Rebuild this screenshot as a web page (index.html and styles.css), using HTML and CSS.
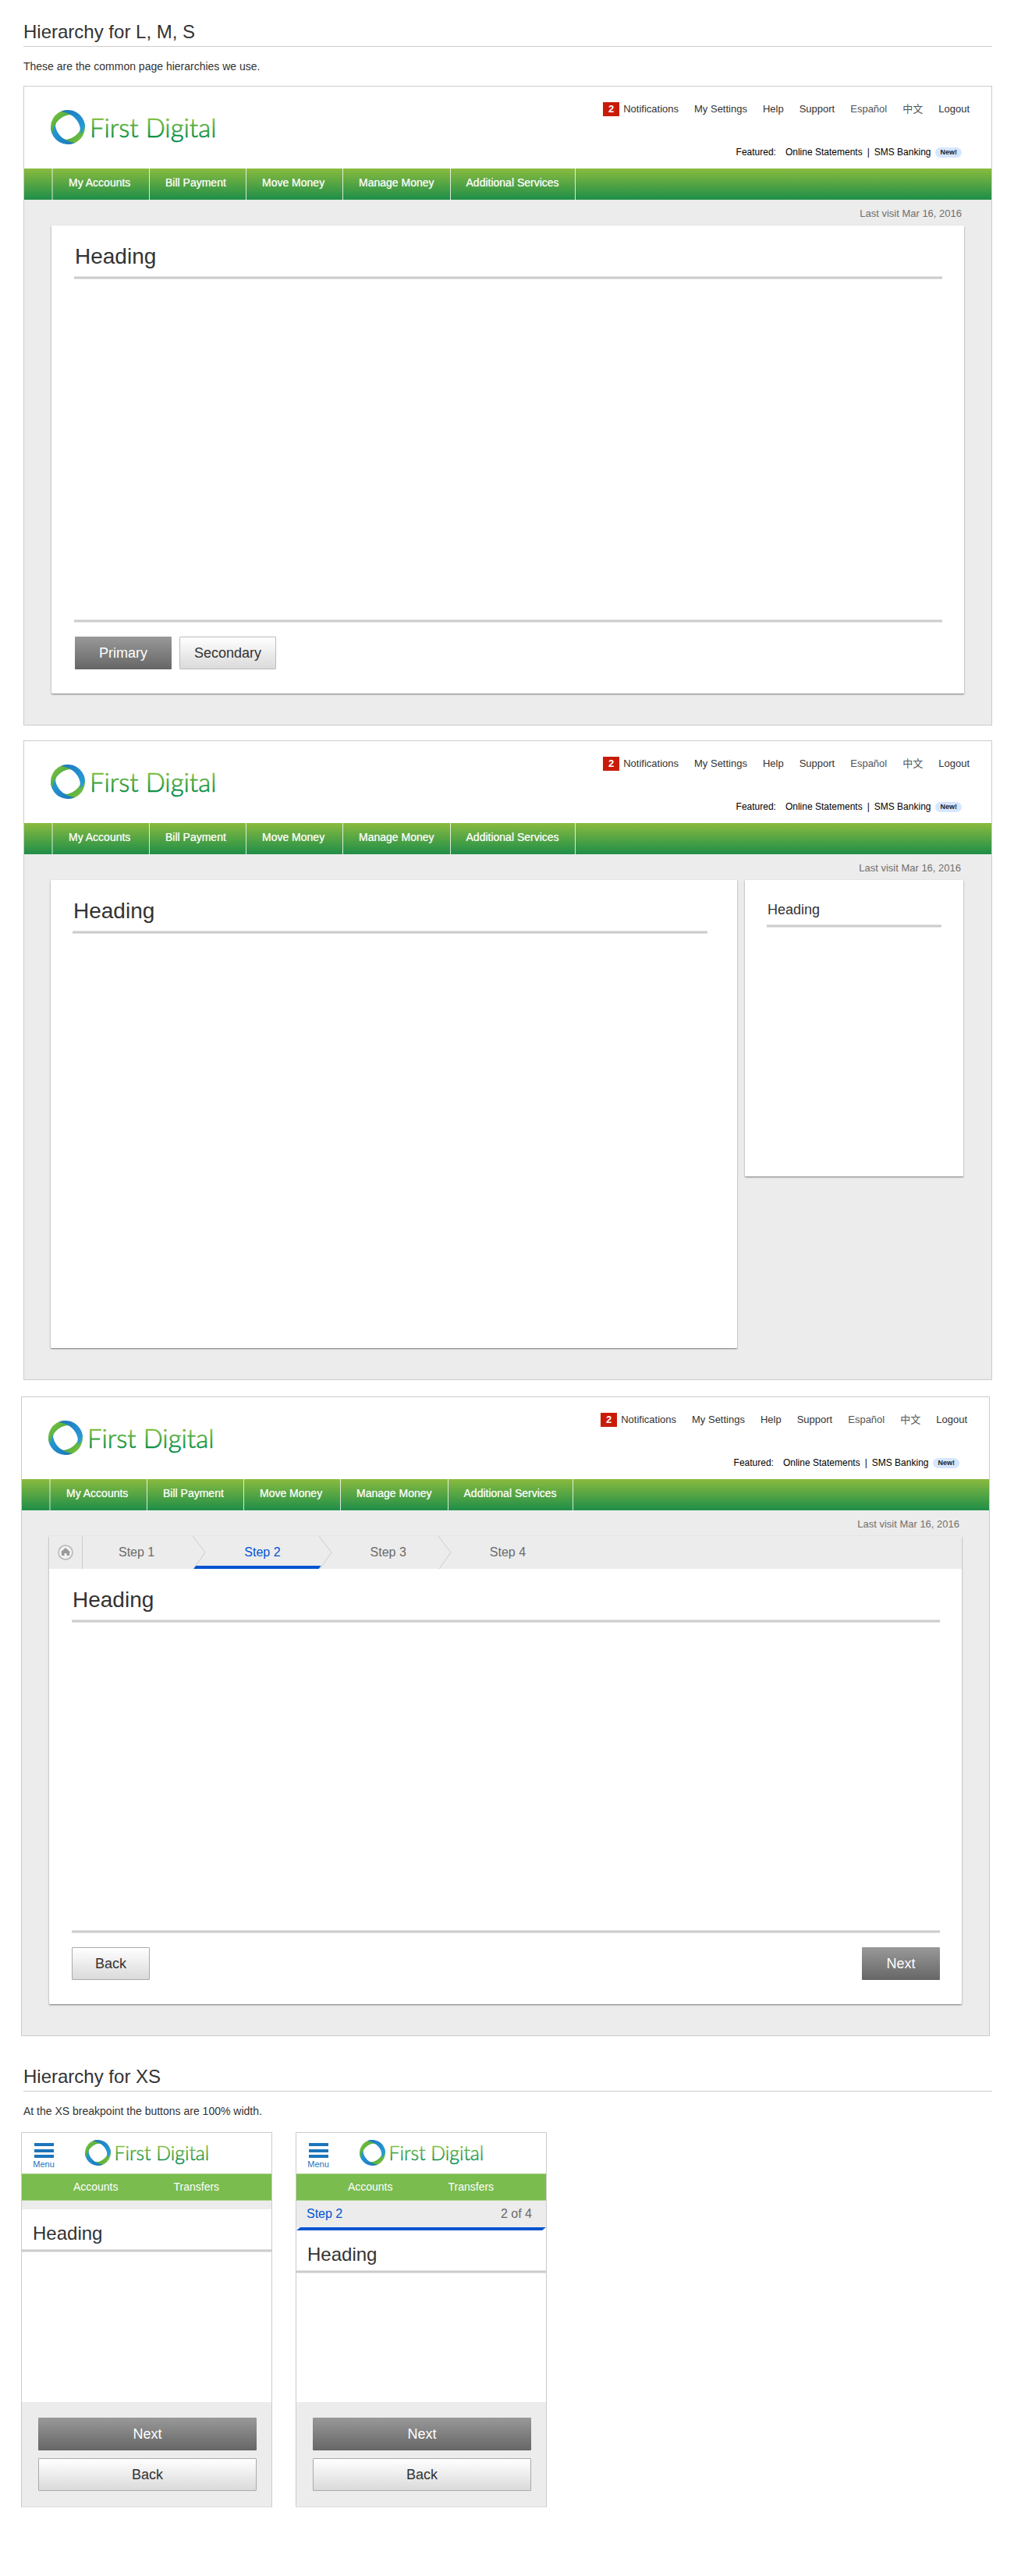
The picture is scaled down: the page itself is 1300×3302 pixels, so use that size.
FILE: index.html
```html
<!DOCTYPE html>
<html lang="en">
<head>
<meta charset="utf-8">
<title>Page hierarchy</title>
<link rel="stylesheet" href="styles.css">
</head>
<body>
<svg class="defs" width="0" height="0" aria-hidden="true">
  <defs>
    <linearGradient id="word" gradientUnits="userSpaceOnUse" x1="0" y1="8" x2="0" y2="36">
      <stop offset="0" stop-color="#8cc63f"/><stop offset="1" stop-color="#008a3e"/>
    </linearGradient>
    <linearGradient id="leaf" x1="1" y1="0" x2="0" y2="1">
      <stop offset="0" stop-color="#8cc63f"/><stop offset="1" stop-color="#129347"/>
    </linearGradient>
    <linearGradient id="water" x1="0" y1="0" x2="1" y2="1">
      <stop offset="0" stop-color="#1c75bc"/><stop offset="1" stop-color="#29a3dc"/>
    </linearGradient>
    <path id="blade" d="M-9-20A22 22 0 0 1 22-2C21 3 19 7 16 9C18-4 9-18-9-20Z"/>
    <symbol id="logo" viewBox="0 0 212 48">
      <g transform="translate(22 22)">
        <circle r="18" fill="none" stroke="#43a548" stroke-width="4"/>
        <use href="#blade" fill="url(#leaf)" transform="rotate(90)"/>
        <use href="#blade" fill="url(#water)" transform="rotate(180)"/>
        <use href="#blade" fill="url(#leaf)" transform="rotate(270)"/>
        <use href="#blade" fill="url(#water)"/>
      </g>
      <text class="logo__word" x="50" y="35" fill="url(#word)" stroke="url(#word)">First Digital</text>
    </symbol>
    <symbol id="chevron" viewBox="0 0 17 42">
      <path d="M0 0L16 21L1 42" fill="none" stroke="#ccc"/>
    </symbol>
  </defs>
</svg>

<main class="page">
<section>
  <h2 class="title">Hierarchy for L, M, S</h2>
  <p class="intro">These are the common page hierarchies we use.</p>

  <article class="frame">
    <header class="header">
      <svg class="logo" role="img" aria-label="First Digital"><use href="#logo"/></svg>
      <div class="header__links">
        <nav class="utility"><a href="#"><b class="count">2</b>Notifications</a><a href="#">My Settings</a><a href="#">Help</a><a href="#">Support</a><a href="#" class="lang">Español</a><a href="#" class="lang">中文</a><a href="#">Logout</a></nav>
        <div class="featured"><span class="featured__label">Featured:</span><a href="#">Online Statements</a><span class="bar">|</span><a href="#">SMS Banking</a><span class="new">New!</span></div>
      </div>
    </header>
    <nav class="nav"><a href="#">My Accounts</a><a href="#">Bill Payment</a><a href="#">Move Money</a><a href="#">Manage Money</a><a href="#">Additional Services</a></nav>
    <div class="content">
      <p class="visit">Last visit Mar 16, 2016</p>
      <div class="card">
        <h1 class="heading">Heading</h1>
        <hr class="rule">
        <div class="space space--tall"></div>
        <hr class="rule">
        <div class="actions"><button class="btn btn--primary">Primary</button><button class="btn btn--soft">Secondary</button></div>
      </div>
    </div>
  </article>

  <article class="frame">
    <header class="header">
      <svg class="logo" role="img" aria-label="First Digital"><use href="#logo"/></svg>
      <div class="header__links">
        <nav class="utility"><a href="#"><b class="count">2</b>Notifications</a><a href="#">My Settings</a><a href="#">Help</a><a href="#">Support</a><a href="#" class="lang">Español</a><a href="#" class="lang">中文</a><a href="#">Logout</a></nav>
        <div class="featured"><span class="featured__label">Featured:</span><a href="#">Online Statements</a><span class="bar">|</span><a href="#">SMS Banking</a><span class="new">New!</span></div>
      </div>
    </header>
    <nav class="nav"><a href="#">My Accounts</a><a href="#">Bill Payment</a><a href="#">Move Money</a><a href="#">Manage Money</a><a href="#">Additional Services</a></nav>
    <div class="content content--split">
      <p class="visit">Last visit Mar 16, 2016</p>
      <div class="columns">
        <div class="card card--main">
          <h1 class="heading">Heading</h1>
          <hr class="rule">
        </div>
        <aside class="card card--side">
          <h2 class="heading heading--small">Heading</h2>
          <hr class="rule">
        </aside>
      </div>
    </div>
  </article>

  <article class="frame frame--wizard">
    <header class="header">
      <svg class="logo" role="img" aria-label="First Digital"><use href="#logo"/></svg>
      <div class="header__links">
        <nav class="utility"><a href="#"><b class="count">2</b>Notifications</a><a href="#">My Settings</a><a href="#">Help</a><a href="#">Support</a><a href="#" class="lang">Español</a><a href="#" class="lang">中文</a><a href="#">Logout</a></nav>
        <div class="featured"><span class="featured__label">Featured:</span><a href="#">Online Statements</a><span class="bar">|</span><a href="#">SMS Banking</a><span class="new">New!</span></div>
      </div>
    </header>
    <nav class="nav"><a href="#">My Accounts</a><a href="#">Bill Payment</a><a href="#">Move Money</a><a href="#">Manage Money</a><a href="#">Additional Services</a></nav>
    <div class="content">
      <p class="visit">Last visit Mar 16, 2016</p>
      <div class="card card--wizard">
        <ol class="steps">
          <li class="steps__home"><a href="#" aria-label="Home"><svg width="20" height="20" viewBox="0 0 20 20"><circle cx="10" cy="10" r="9" fill="#f2f2f2" stroke="#b5b5b5" stroke-width="1.5"/><path d="M10 4L16 9.500L15 10.500V14H11.500V11H8.500V14H5V10.500L4 9.500Z" fill="#999"/></svg></a></li>
          <li class="step step--first">Step 1<svg class="chevron"><use href="#chevron"/></svg></li>
          <li class="step step--current" aria-current="step">Step 2<svg class="chevron"><use href="#chevron"/></svg></li>
          <li class="step step--short">Step 3<svg class="chevron"><use href="#chevron"/></svg></li>
          <li class="step">Step 4</li>
        </ol>
        <div class="card__body">
          <h1 class="heading">Heading</h1>
          <hr class="rule">
          <div class="space"></div>
          <hr class="rule">
          <div class="actions actions--ends"><button class="btn">Back</button><button class="btn btn--primary">Next</button></div>
        </div>
      </div>
    </div>
  </article>
</section>

<section class="xs">
  <h2 class="title">Hierarchy for XS</h2>
  <p class="intro">At the XS breakpoint the buttons are 100% width.</p>
  <div class="phones">
    <article class="phone">
      <header class="phone__header">
        <button class="menu"><svg width="25" height="20" viewBox="0 0 25 20"><path d="M0 2H25M0 10H25M0 17H25" stroke="#1c75bc" stroke-width="4"/></svg>Menu</button>
        <svg class="logo logo--small" role="img" aria-label="First Digital"><use href="#logo"/></svg>
      </header>
      <nav class="phone__nav"><a href="#">Accounts</a><a href="#">Transfers</a></nav>
      <div class="strip"></div>
      <div class="phone__body">
        <h1 class="heading heading--phone">Heading</h1>
        <hr class="rule">
      </div>
      <div class="phone__actions"><button class="btn btn--primary">Next</button><button class="btn">Back</button></div>
    </article>
    <article class="phone">
      <header class="phone__header">
        <button class="menu"><svg width="25" height="20" viewBox="0 0 25 20"><path d="M0 2H25M0 10H25M0 17H25" stroke="#1c75bc" stroke-width="4"/></svg>Menu</button>
        <svg class="logo logo--small" role="img" aria-label="First Digital"><use href="#logo"/></svg>
      </header>
      <nav class="phone__nav"><a href="#">Accounts</a><a href="#">Transfers</a></nav>
      <div class="progress"><span class="progress__step">Step 2</span><span>2 of 4</span></div>
      <div class="progress__line"></div>
      <div class="phone__body">
        <h1 class="heading heading--phone">Heading</h1>
        <hr class="rule">
      </div>
      <div class="phone__actions"><button class="btn btn--primary">Next</button><button class="btn">Back</button></div>
    </article>
  </div>
</section>
</main>
</body>
</html>
```
FILE: styles.css
```css
* { box-sizing: border-box; }

body {
  margin: 0;
  background: #fff;
  color: #333;
  font-family: "Liberation Sans", "Noto Sans CJK SC", sans-serif;
}

h1, h2, p, ol { margin: 0; padding: 0; font-weight: 400; }
a { color: inherit; text-decoration: none; }
button { font-family: inherit; }
.defs { position: absolute; }

.page { padding: 27px 28px 88px 27px; }

.title {
  margin-left: 3px;
  padding-bottom: 4px;
  border-bottom: 1px solid #ccc;
  font-size: 24px;
  line-height: 28px;
}
.intro {
  margin: 17px 0 17px 3px;
  font-size: 14px;
  line-height: 16px;
}

/* Desktop frames */
.frame {
  margin: 0 0 19px 3px;
  border: 1px solid #ccc;
  background: #ececec;
}
.frame--wizard { margin: 21px 3px 0 0; }

.header {
  display: flex;
  justify-content: space-between;
  align-items: flex-start;
  height: 105px;
  padding: 20px 28px 0 34px;
  background: #fff;
}
.logo { width: 212px; height: 48px; margin-top: 10px; }
.logo--small { width: 159px; height: 36px; margin-top: 0; }
.logo__word { font: 300 33px Lato, sans-serif; stroke-width: .6; }

.header__links { display: flex; flex-direction: column; align-items: flex-end; }
.utility {
  display: flex;
  gap: 20px;
  font-size: 13px;
  line-height: 18px;
}
.utility a { display: flex; gap: 5px; }
.lang { color: #555; }
.count {
  width: 21px;
  background: #c91c08;
  color: #fff;
  text-align: center;
}
.featured {
  display: flex;
  align-items: center;
  margin: 38px 10px 0 0;
  color: #000;
  font-size: 12px;
  line-height: 16px;
}
.featured__label { margin-right: 12px; }
.bar { margin: 0 6px; }
.new {
  margin-left: 6px;
  padding: 0 6px;
  border-radius: 7px;
  background: #d6e6ff;
  color: #222;
  font-size: 9px;
  font-weight: 700;
  line-height: 13px;
}

.nav {
  display: flex;
  height: 40px;
  padding-left: 35px;
  background: linear-gradient(#8abb3f, #1e8e48);
  color: #fff;
  font-size: 14px;
  line-height: 36px;
  text-shadow: 0 0 1px rgba(255, 255, 255, .6);
}
.nav a {
  min-width: 124px;
  padding: 0 20px;
  border-right: 1px solid rgba(255, 255, 255, .8);
}
.nav a:first-child {
  min-width: 126px;
  border-left: 2px solid rgba(255, 255, 255, .4);
}

.content { padding: 10px 35px 40px; }
.content--split { padding: 10px 36px 40px 34px; }
.visit {
  margin: 0 3px 7px 0;
  color: #707070;
  font-size: 13px;
  line-height: 16px;
  text-align: right;
}
.card {
  padding: 24px 28px 31px 29px;
  border-radius: 1px;
  background: #fff;
  box-shadow: 0 1px 2px rgba(0, 0, 0, .5);
}
.columns { display: flex; align-items: flex-start; gap: 10px; }
.card--main { flex: 1; min-height: 600px; padding: 24px 38px 31px 28px; }
.card--side { width: 280px; min-height: 380px; padding: 28px; }

.heading { padding-left: 1px; font-size: 28px; line-height: 32px; }
.heading--small { font-size: 18px; line-height: 20px; }
.rule {
  height: 4px;
  margin: 0;
  border: solid #e2e2e2;
  border-width: 1px 0;
  background: #ccc;
}
.heading + .rule { margin-top: 9px; }
.space { height: 394px; }
.space--tall { height: 436px; }

.actions { display: flex; gap: 10px; margin-top: 18px; padding-left: 1px; }
.actions--ends { justify-content: space-between; padding-left: 0; }
.btn {
  height: 42px;
  min-width: 100px;
  padding: 0 18px;
  border: 1px solid #aaa;
  border-radius: 1px;
  background: linear-gradient(#fff, #dadada);
  color: #333;
  font-size: 18px;
}
.btn--soft { border-color: #bbb; }
.btn--primary {
  border: 0;
  background: linear-gradient(#999, #666);
  color: #fff;
}
.actions:not(.actions--ends) .btn { width: 124px; }

/* Step bar */
.card--wizard { padding: 0; }
.card__body { padding: 24px 28px 31px 29px; }
.steps {
  display: flex;
  align-items: center;
  height: 42px;
  background: #ececec;
  list-style: none;
  color: #6b6b6b;
  font-size: 16px;
}
.steps__home {
  display: flex;
  align-items: center;
  width: 43px;
  height: 42px;
  padding-left: 11px;
  border-right: 1px solid #ccc;
}
.steps__home a { display: flex; }
.step {
  position: relative;
  display: flex;
  align-items: center;
  height: 42px;
  padding-left: 49px;
}
.step--first { padding-left: 46px; }
.chevron { width: 17px; height: 42px; margin-left: 49px; }
.step--short .chevron { margin-left: 41px; }
.step--current { color: #0054d1; }
.step--current::after {
  content: "";
  position: absolute;
  right: 14px;
  bottom: 0;
  left: -16px;
  height: 4px;
  background: #0054d1;
  clip-path: polygon(3px 0, 100% 0, calc(100% - 3px) 100%, 0 100%);
}

/* Phone frames */
.xs { padding-top: 38px; }
.phones { display: flex; gap: 30px; margin-top: 19px; }
.phone {
  display: flex;
  flex-direction: column;
  width: 322px;
  min-height: 481px;
  border: 1px solid #ccc;
  border-bottom-color: #ddd;
  background: #fff;
}
.phone__header {
  display: flex;
  align-items: flex-start;
  gap: 38px;
  height: 52px;
  padding: 9px 13px;
}
.menu {
  display: flex;
  flex-direction: column;
  align-items: center;
  width: 30px;
  padding: 4px 0 0;
  border: 0;
  background: none;
  color: #1c75bc;
  font-size: 11px;
  line-height: 14px;
}
.phone__nav {
  display: flex;
  justify-content: center;
  gap: 71px;
  padding-right: 1px;
  border: solid #abd48c;
  border-width: 1px 0;
  background: #7bbc4f;
  color: #fff;
  font-size: 14px;
  line-height: 33px;
}
.strip { height: 11px; background: #ececec; }
.phone__body { flex: 1; padding-top: 17px; }
.heading--phone { padding-left: 14px; font-size: 24px; line-height: 28px; }
.heading--phone + .rule { margin-top: 6px; }
.phone__actions {
  display: flex;
  flex-direction: column;
  gap: 10px;
  padding: 20px 19px 20px 21px;
  background: #ececec;
}
.progress {
  display: flex;
  justify-content: space-between;
  padding: 0 18px 0 13px;
  background: #ececec;
  color: #6b6b6b;
  font-size: 16px;
  line-height: 34px;
}
.progress__step { color: #0054d1; }
.progress__line {
  height: 4px;
  background: #0054d1;
  clip-path: polygon(5px 0, 100% 0, calc(100% - 5px) 100%, 0 100%);
}
```
